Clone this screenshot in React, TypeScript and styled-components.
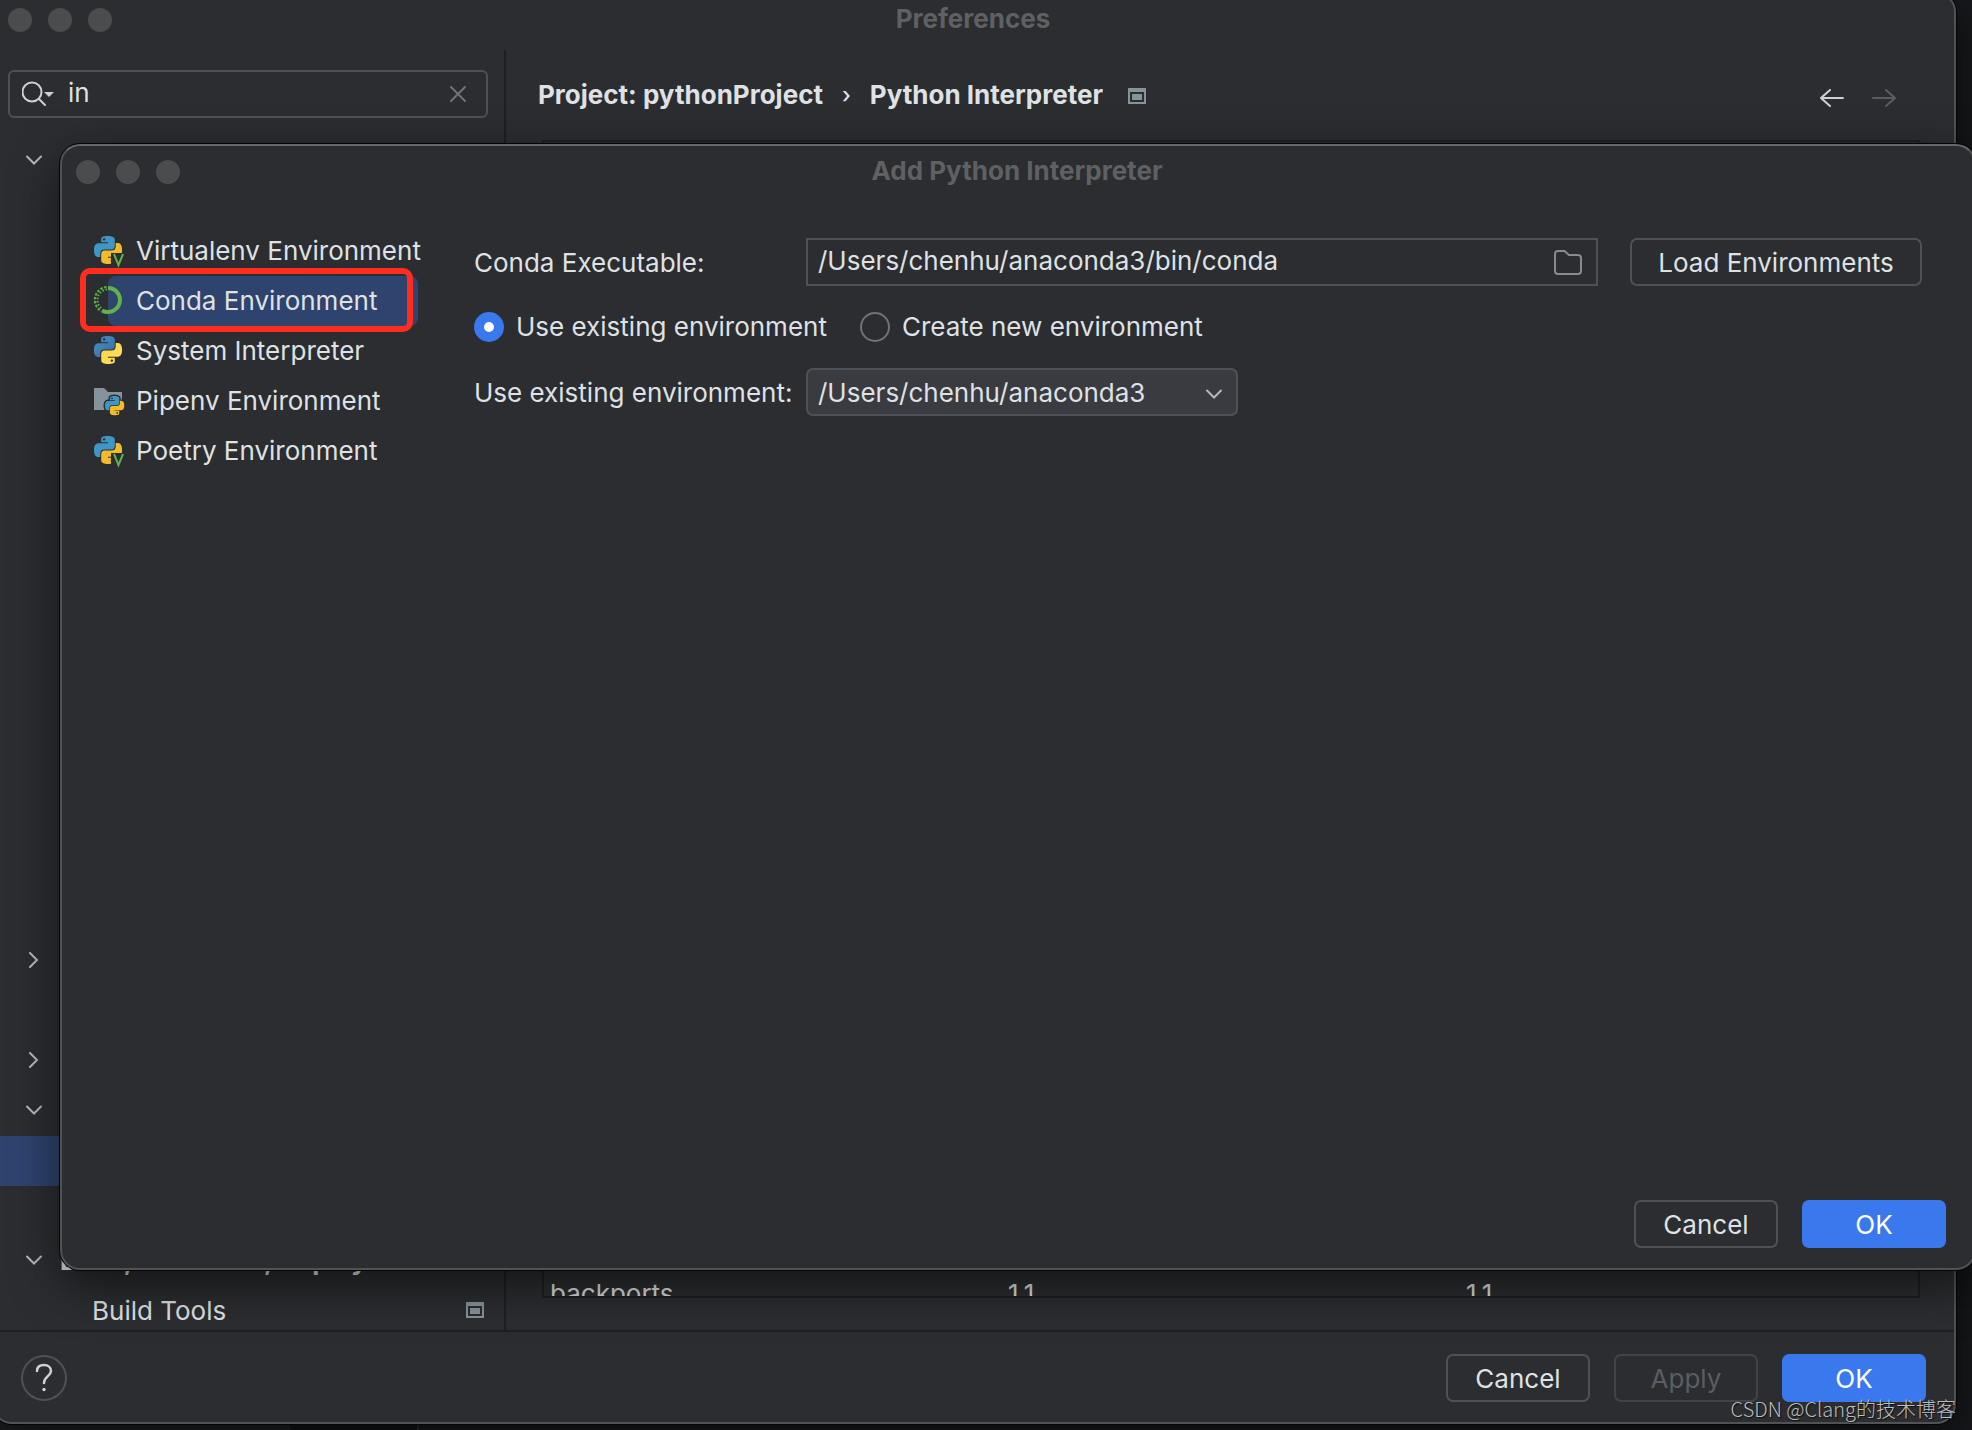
import React, { useState } from "react";
import styled, { createGlobalStyle, css } from "styled-components";

const color = {
  window: "#2b2d30",
  edge: "#505254",
  edgeTop: "#65676a",
  line: "#1e1f22",
  control: "#4e5157",
  text: "#dfe1e5",
  muted: "#5f6063",
  accent: "#3a78ed",
  selection: "#2e436e",
};

const Global = createGlobalStyle`
  *, *::before, *::after { box-sizing: border-box; }
  html, body { margin: 0; height: 100%; overflow: hidden; }
  body, button, input, select {
    font-family: Inter, "Liberation Sans", sans-serif;
    font-size: 26px;
    line-height: 32px;
    color: ${color.text};
  }
`;

const Desktop = styled.div`
  position: relative;
  height: 100vh;
  overflow: hidden;
  background: linear-gradient(90deg, #1e1f22 290px, #131416 290px, #131416 417px, #2b2d30 417px, #2b2d30 419px, #17181b 419px);
`;

const Window = styled.section<{ $place: string; $lit?: boolean }>`
  position: absolute;
  inset: ${(p) => p.$place};
  display: flex;
  flex-direction: column;
  overflow: hidden;
  background: ${color.window};
  border: 2px solid ${color.edge};
  border-top-color: ${(p) => (p.$lit ? color.edgeTop : color.edge)};
  border-radius: 20px;
  box-shadow: 0 0 0 1px #050506, 0 16px 48px rgba(0, 0, 0, 0.55);
`;

const TitleBar = styled.header`
  flex: none;
  display: grid;
  grid-template-columns: 1fr auto 1fr;
  align-items: center;
  height: 52px;
  padding: 0 16px 0 14px;
`;

const Lights = styled.div`
  display: flex;
  gap: 16px;
`;

const Light = styled.span`
  width: 24px;
  height: 24px;
  border-radius: 50%;
  background: #4b4c4d;
`;

const Title = styled.h1`
  margin: 0;
  padding-bottom: 2px;
  font-size: 26px;
  line-height: 32px;
  font-weight: 700;
  color: ${color.muted};
`;

const Body = styled.div`
  flex: 1;
  min-height: 0;
  display: flex;
  margin-top: 4px;
  border-bottom: 2px solid ${color.line};
`;

const Sidebar = styled.aside`
  flex: none;
  width: 512px;
  display: flex;
  flex-direction: column;
  padding-top: 20px;
  border-right: 2px solid ${color.line};
  overflow: hidden;
`;

const Search = styled.div`
  flex: none;
  display: flex;
  align-items: center;
  height: 48px;
  margin: 0 16px 18px 14px;
  padding: 0 20px 0 12px;
  border: 2px solid ${color.control};
  border-radius: 6px;
`;

const TextInput = styled.input`
  flex: 1;
  min-width: 0;
  padding: 0;
  border: 0;
  outline: 0;
  background: transparent;
`;

const SearchInput = styled(TextInput)`
  margin-left: 14px;
  padding-bottom: 2px;
`;

const IconButton = styled.button`
  display: flex;
  padding: 0;
  border: 0;
  background: transparent;
`;

const Tree = styled.ul`
  margin: 0;
  padding: 0;
  list-style: none;
`;

const TreeRow = styled.li<{ $selected?: boolean; $child?: boolean; $strong?: boolean }>`
  display: flex;
  align-items: center;
  justify-content: space-between;
  height: 50px;
  padding: 0 20px 0 ${(p) => (p.$child ? 98 : 32)}px;
  font-weight: ${(p) => (p.$strong ? 700 : 400)};
  background: ${(p) => (p.$selected ? color.selection : "transparent")};

  > svg {
    margin-bottom: 2px;
  }
`;

const Branch = styled.span`
  display: flex;
  align-items: center;
  gap: 18px;

  svg {
    margin-bottom: 2px;
  }
`;

const Main = styled.main`
  flex: 1;
  min-width: 0;
  display: flex;
  flex-direction: column;
  padding: 0 34px 32px 36px;
`;

const PageHeader = styled.div`
  flex: none;
  display: flex;
  align-items: center;
  justify-content: space-between;
  height: 90px;
  padding: 0 24px 0 0;
  margin-left: -4px;
`;

const Crumbs = styled.div`
  display: flex;
  align-items: center;
  gap: 19px;
  font-weight: 700;

  svg {
    margin-left: 6px;
    margin-top: 2px;
  }
`;

const CrumbArrow = styled.span`
  font-weight: 500;
  font-size: 22px;
`;

const Nav = styled.div`
  display: flex;
  gap: 28px;
  padding-top: 6px;
`;

const PackageFrame = styled.div`
  flex: 1;
  min-height: 0;
  display: flex;
  align-items: flex-end;
  overflow: hidden;
  border: 2px solid ${color.line};
`;

const PackageTable = styled.table`
  width: 100%;
  margin-bottom: -23px;
  table-layout: fixed;
  border-collapse: collapse;

  td {
    height: 50px;
    padding: 0 6px;
  }
`;

const Footer = styled.footer`
  flex: none;
  display: flex;
  align-items: center;
  gap: 24px;
  padding: 22px 28px 20px 27px;
`;

const Spacer = styled.span`
  flex: 1;
`;

const Button = styled.button<{ $primary?: boolean }>`
  min-width: 144px;
  height: 48px;
  padding: 2px 26px 0;
  border: 2px solid ${color.control};
  border-radius: 7px;
  background: transparent;
  white-space: nowrap;

  ${(p) =>
    p.$primary &&
    css`
      border-color: ${color.accent};
      background: ${color.accent};
      color: #fff;
    `}

  &:disabled {
    border-color: #414347;
    color: #5a5d63;
  }
`;

const HelpButton = styled.button`
  display: grid;
  place-items: center;
  width: 46px;
  height: 46px;
  padding: 0;
  border: 2px solid ${color.control};
  border-radius: 50%;
  background: transparent;
`;

const DialogBody = styled.div`
  flex: 1;
  min-height: 0;
  display: flex;
  gap: 56px;
  padding: 28px 52px 0 32px;
`;

const KindList = styled.nav`
  flex: none;
  width: 324px;
`;

const Kind = styled.button<{ $selected?: boolean }>`
  position: relative;
  display: flex;
  align-items: center;
  gap: 14px;
  width: 100%;
  height: 50px;
  padding: 0;
  border: 0;
  background: transparent;
  white-space: nowrap;
  isolation: isolate;

  &::before {
    content: "";
    position: absolute;
    z-index: -1;
    inset: 0 0 0 14px;
    border-radius: 8px;
    background: ${(p) => (p.$selected ? color.selection : "transparent")};
  }
`;

const Marker = styled.span`
  position: absolute;
  inset: -8px 5px -6px -14px;
  border: 6px solid #ff2d20;
  border-radius: 10px;
`;

const KindIcon = styled.span`
  flex: none;
  width: 28px;
  height: 28px;
  margin-bottom: 2px;

  svg {
    display: block;
    overflow: visible;
  }
`;

const Form = styled.form`
  flex: 1;
  min-width: 0;
  display: grid;
  grid-template-columns: 320px 1fr 292px;
  grid-template-rows: 48px 30px 48px;
  align-items: center;
  align-content: start;
  row-gap: 26px;
  column-gap: 12px;
  padding-top: 12px;
`;

const FieldLabel = styled.label`
  padding-top: 2px;
`;

const PathField = styled.div`
  display: flex;
  align-items: center;
  height: 48px;
  margin-right: 20px;
  padding: 0 14px 0 10px;
  border: 2px solid ${color.control};

  input {
    padding-bottom: 2px;
  }
`;

const RadioRow = styled.div`
  grid-column: 1 / -1;
  display: flex;
  gap: 33px;
`;

const RadioLabel = styled.label`
  display: flex;
  align-items: center;
  gap: 12px;
`;

const Radio = styled.input`
  appearance: none;
  width: 30px;
  height: 30px;
  margin: 0;
  border: 2px solid #6f737a;
  border-radius: 50%;

  &:checked {
    border: 10px solid ${color.accent};
    background: #fff;
  }
`;

const SelectBox = styled.div`
  position: relative;
  width: 432px;

  svg {
    position: absolute;
    right: 16px;
    top: 18px;
    pointer-events: none;
  }
`;

const Select = styled.select`
  appearance: none;
  display: block;
  width: 100%;
  height: 48px;
  padding: 2px 44px 0 10px;
  border: 2px solid ${color.control};
  border-radius: 7px;
  background: #393b40;
`;

const Watermark = styled.div`
  position: absolute;
  right: 16px;
  bottom: 6px;
  font-family: "Noto Sans CJK SC", sans-serif;
  font-size: 20px;
  line-height: 30px;
  font-weight: 300;
  color: #bcbdbf;
  text-shadow: 1px 1px 1px rgba(0, 0, 0, 0.7);
`;

const PY_TOP =
  "M14.25.18l.9.2.73.26.59.3.45.32.34.34.25.34.16.33.1.3.04.26.02.2-.01.13V8.5l-.05.63-.13.55-.21.46-.26.38-.3.31-.33.25-.35.19-.35.14-.33.1-.3.07-.26.04-.21.02H8.77l-.69.05-.59.14-.5.22-.41.27-.33.32-.27.35-.2.36-.15.37-.1.35-.07.32-.04.27-.02.21v3.06H3.17l-.21-.03-.28-.07-.32-.12-.35-.18-.36-.26-.36-.36-.35-.46-.32-.59-.28-.73-.21-.88-.14-1.05-.05-1.23.06-1.22.16-1.04.24-.87.32-.71.36-.57.4-.44.42-.33.42-.24.4-.16.36-.1.32-.05.24-.01h.16l.06.01h8.16v-.83H6.18l-.01-2.75-.02-.37.05-.34.11-.31.17-.28.25-.26.31-.23.38-.2.44-.18.51-.15.58-.12.64-.1.71-.06.77-.04.84-.02 1.27.05zm-6.3 1.98l-.23.33-.08.41.08.41.23.34.33.22.41.09.41-.09.33-.22.23-.34.08-.41-.08-.41-.23-.33-.33-.22-.41-.09-.41.09z";
const PY_BOTTOM =
  "M21.04 6.11l.28.06.32.12.35.18.36.27.36.35.35.47.32.59.28.73.21.88.14 1.04.05 1.23-.06 1.23-.16 1.04-.24.86-.32.71-.36.57-.4.45-.42.33-.42.24-.4.16-.36.09-.32.05-.24.02-.16-.01h-8.22v.82h5.84l.01 2.76.02.36-.05.34-.11.31-.17.29-.25.25-.31.24-.38.2-.44.17-.51.15-.58.13-.64.09-.71.07-.77.04-.84.01-1.27-.04-1.07-.14-.9-.2-.73-.25-.59-.3-.45-.33-.34-.34-.25-.34-.16-.33-.1-.3-.04-.25-.02-.2.01-.13v-5.34l.05-.64.13-.54.21-.46.26-.38.3-.32.33-.24.35-.2.35-.14.33-.1.3-.06.26-.04.21-.02.13-.01h5.84l.69-.05.59-.14.5-.21.41-.28.33-.32.27-.35.2-.36.15-.36.1-.35.07-.32.04-.28.02-.21V6.07h2.09l.14.01zm-6.47 14.25l-.23.33-.08.41.08.41.23.33.33.23.41.08.41-.08.33-.23.23-.33.08-.41-.08-.41-.23-.33-.33-.23-.41-.08-.41.08z";

const PythonIcon = () => (
  <svg width="28" height="28" viewBox="0 0 24 24">
    <defs>
      <linearGradient id="pyBlue" x1="0" y1="0" x2="1" y2="1">
        <stop offset="0" stopColor="#4a90c8" />
        <stop offset="1" stopColor="#356c9c" />
      </linearGradient>
      <linearGradient id="pyYellow" x1="0" y1="0" x2="1" y2="1">
        <stop offset="0" stopColor="#ffd43b" />
        <stop offset="1" stopColor="#ffe166" />
      </linearGradient>
    </defs>
    <path d={PY_TOP} fill="url(#pyBlue)" />
    <path d={PY_BOTTOM} fill="url(#pyYellow)" />
  </svg>
);

const VenvIcon = () => (
  <svg width="28" height="28" viewBox="0 0 28 28">
    <defs>
      <clipPath id="venvCut">
        <path d="M0 0H28V17H17V28H0Z" />
      </clipPath>
    </defs>
    <g clipPath="url(#venvCut)">
      <g transform="scale(1.1667)">
        <path d={PY_TOP} fill="#3f96c4" />
        <path d={PY_BOTTOM} fill="#f2bb2b" />
      </g>
    </g>
    <path d="M20 18L24.500 29L29 18" fill="none" stroke="#5fb04c" strokeWidth="2" />
  </svg>
);

const PipenvIcon = () => (
  <svg width="28" height="28" viewBox="0 0 28 28">
    <path d="M0 2H10L14 6H28V24H0Z" fill="#87939a" />
    <g transform="translate(11 10) scale(0.800)">
      <path d={PY_TOP} fill={color.window} stroke={color.window} strokeWidth="3.500" />
      <path d={PY_BOTTOM} fill={color.window} stroke={color.window} strokeWidth="3.500" />
      <path d={PY_TOP} fill="#3f96c4" />
      <path d={PY_BOTTOM} fill="#f2bb2b" />
    </g>
  </svg>
);

const CondaIcon = () => (
  <svg width="28" height="28" viewBox="0 0 28 28" fill="none" stroke="#62b14b">
    <path d="M14 2A12 12 0 1 1 8 24.400" strokeWidth="4" />
    <path d="M12.500 1A13 13 0 0 0 7 25" strokeWidth="2" strokeDasharray="2.500 1.500" />
    <path d="M13 3.500A10.500 10.500 0 0 0 8.500 23" strokeWidth="2" strokeDasharray="1.500 1.800" />
  </svg>
);

const Chevron = ({ open }: { open?: boolean }) => (
  <svg width="16" height="16" viewBox="0 0 16 16" fill="none" stroke="#b4b8bf" strokeWidth="2" strokeLinecap="round">
    <path d={open ? "M1 4.500L8 11.500L15 4.500" : "M4 1L11 8L4 15"} />
  </svg>
);

const ProjectBadge = () => (
  <svg width="18" height="16" viewBox="0 0 18 16">
    <path d="M0 0H18V16H0ZM2 4V14H16V4Z" fill="#87939a" fillRule="evenodd" />
    <path d="M4 6H14V12H4Z" fill="#87939a" />
  </svg>
);

const Arrow = ({ back }: { back?: boolean }) => (
  <svg width="24" height="20" viewBox="0 0 24 20" fill="none" stroke={back ? "#ced0d6" : "#5a5d63"} strokeWidth="2" strokeLinecap="round">
    <path d={back ? "M23 10H1M10 2L1 10L10 18" : "M1 10H23M14 2L23 10L14 18"} />
  </svg>
);

const SearchIcon = () => (
  <svg width="32" height="26" viewBox="0 0 32 26" fill="none" stroke="#ced0d6" strokeWidth="2" strokeLinecap="round">
    <circle cx="10" cy="11" r="9.500" />
    <path d="M17 18L23 24" />
    <path d="M22 11H32L27 16Z" fill="#ced0d6" stroke="none" />
  </svg>
);

const ClearIcon = () => (
  <svg width="16" height="16" viewBox="0 0 16 16" stroke="#6f737a" strokeWidth="2" strokeLinecap="round">
    <path d="M1 1L15 15M15 1L1 15" />
  </svg>
);

const FolderIcon = () => (
  <svg width="28" height="26" viewBox="0 0 28 26" fill="none" stroke="#868a91" strokeWidth="2" strokeLinejoin="round">
    <path d="M4 2H10.500L15 6H24A3 3 0 0 1 27 9V22A3 3 0 0 1 24 25H4A3 3 0 0 1 1 22V5A3 3 0 0 1 4 2Z" />
  </svg>
);

const HelpIcon = () => (
  <svg width="18" height="30" viewBox="0 0 18 30" fill="none" stroke="#ced0d6" strokeWidth="2.500" strokeLinecap="round">
    <path d="M2 8C2 4 5 2 9 2S16 4.400 16 8C16 13 9 13.500 9 20" />
    <circle cx="9" cy="26.500" r="1.700" fill="#ced0d6" stroke="none" />
  </svg>
);

type TreeItem = { open?: boolean; closed?: boolean; selected?: boolean; label?: string; child?: boolean };

const tree: TreeItem[] = Array.from({ length: 24 }, () => ({}));
tree[0] = { open: true };
tree[16] = { closed: true };
tree[18] = { closed: true };
tree[19] = { open: true };
tree[20] = { selected: true };
tree[22] = { open: true, label: "Build, Execution, Deployment" };
tree[23] = { child: true, label: "Build Tools" };

const kinds = [
  { name: "Virtualenv Environment", Icon: VenvIcon },
  { name: "Conda Environment", Icon: CondaIcon, marked: true },
  { name: "System Interpreter", Icon: PythonIcon },
  { name: "Pipenv Environment", Icon: PipenvIcon },
  { name: "Poetry Environment", Icon: VenvIcon },
];

const WindowTitle = ({ children }: { children: React.ReactNode }) => (
  <TitleBar>
    <Lights>
      <Light />
      <Light />
      <Light />
    </Lights>
    <Title>{children}</Title>
  </TitleBar>
);

function Preferences() {
  const [query, setQuery] = useState("in");
  return (
    <Window $place="-8px 16px 6px -8px">
      <WindowTitle>Preferences</WindowTitle>
      <Body>
        <Sidebar>
          <Search>
            <SearchIcon />
            <SearchInput aria-label="Search settings" value={query} onChange={(e) => setQuery(e.target.value)} />
            <IconButton type="button" aria-label="Clear search" onClick={() => setQuery("")}>
              <ClearIcon />
            </IconButton>
          </Search>
          <Tree>
            {tree.map((item, i) => (
              <TreeRow key={i} $selected={item.selected} $child={item.child} $strong={!item.child}>
                <Branch>
                  {(item.open || item.closed) && <Chevron open={item.open} />}
                  {item.label}
                </Branch>
                {item.child && <ProjectBadge />}
              </TreeRow>
            ))}
          </Tree>
        </Sidebar>
        <Main>
          <PageHeader>
            <Crumbs>
              <span>Project: pythonProject</span>
              <CrumbArrow>›</CrumbArrow>
              <span>Python Interpreter</span>
              <ProjectBadge />
            </Crumbs>
            <Nav>
              <IconButton type="button" aria-label="Back">
                <Arrow back />
              </IconButton>
              <IconButton type="button" aria-label="Forward" disabled>
                <Arrow />
              </IconButton>
            </Nav>
          </PageHeader>
          <PackageFrame>
            <PackageTable>
              <tbody>
                <tr>
                  <td>backports</td>
                  <td>1.1</td>
                  <td>1.1</td>
                </tr>
              </tbody>
            </PackageTable>
          </PackageFrame>
        </Main>
      </Body>
      <Footer>
        <HelpButton type="button" aria-label="Help">
          <HelpIcon />
        </HelpButton>
        <Spacer />
        <Button type="button">Cancel</Button>
        <Button type="button" disabled>
          Apply
        </Button>
        <Button type="button" $primary>
          OK
        </Button>
      </Footer>
    </Window>
  );
}

function AddInterpreter() {
  const [kind, setKind] = useState("Conda Environment");
  const [mode, setMode] = useState("existing");
  return (
    <Window $place="144px -4px 160px 60px" $lit>
      <WindowTitle>Add Python Interpreter</WindowTitle>
      <DialogBody>
        <KindList>
          {kinds.map(({ name, Icon, marked }) => (
            <Kind key={name} type="button" $selected={kind === name} onClick={() => setKind(name)}>
              <KindIcon>
                <Icon />
              </KindIcon>
              {name}
              {marked && <Marker />}
            </Kind>
          ))}
        </KindList>
        <Form>
          <FieldLabel htmlFor="conda-path">Conda Executable:</FieldLabel>
          <PathField>
            <TextInput id="conda-path" defaultValue="/Users/chenhu/anaconda3/bin/conda" />
            <IconButton type="button" aria-label="Browse">
              <FolderIcon />
            </IconButton>
          </PathField>
          <Button type="button">Load Environments</Button>
          <RadioRow>
            <RadioLabel>
              <Radio type="radio" name="mode" checked={mode === "existing"} onChange={() => setMode("existing")} />
              Use existing environment
            </RadioLabel>
            <RadioLabel>
              <Radio type="radio" name="mode" checked={mode === "new"} onChange={() => setMode("new")} />
              Create new environment
            </RadioLabel>
          </RadioRow>
          <FieldLabel htmlFor="conda-env">Use existing environment:</FieldLabel>
          <SelectBox>
            <Select id="conda-env">
              <option>/Users/chenhu/anaconda3</option>
            </Select>
            <Chevron open />
          </SelectBox>
        </Form>
      </DialogBody>
      <Footer>
        <Spacer />
        <Button type="button">Cancel</Button>
        <Button type="button" $primary>
          OK
        </Button>
      </Footer>
    </Window>
  );
}

export default function App() {
  return (
    <Desktop>
      <Global />
      <Preferences />
      <AddInterpreter />
      <Watermark>CSDN @Clang的技术博客</Watermark>
    </Desktop>
  );
}
